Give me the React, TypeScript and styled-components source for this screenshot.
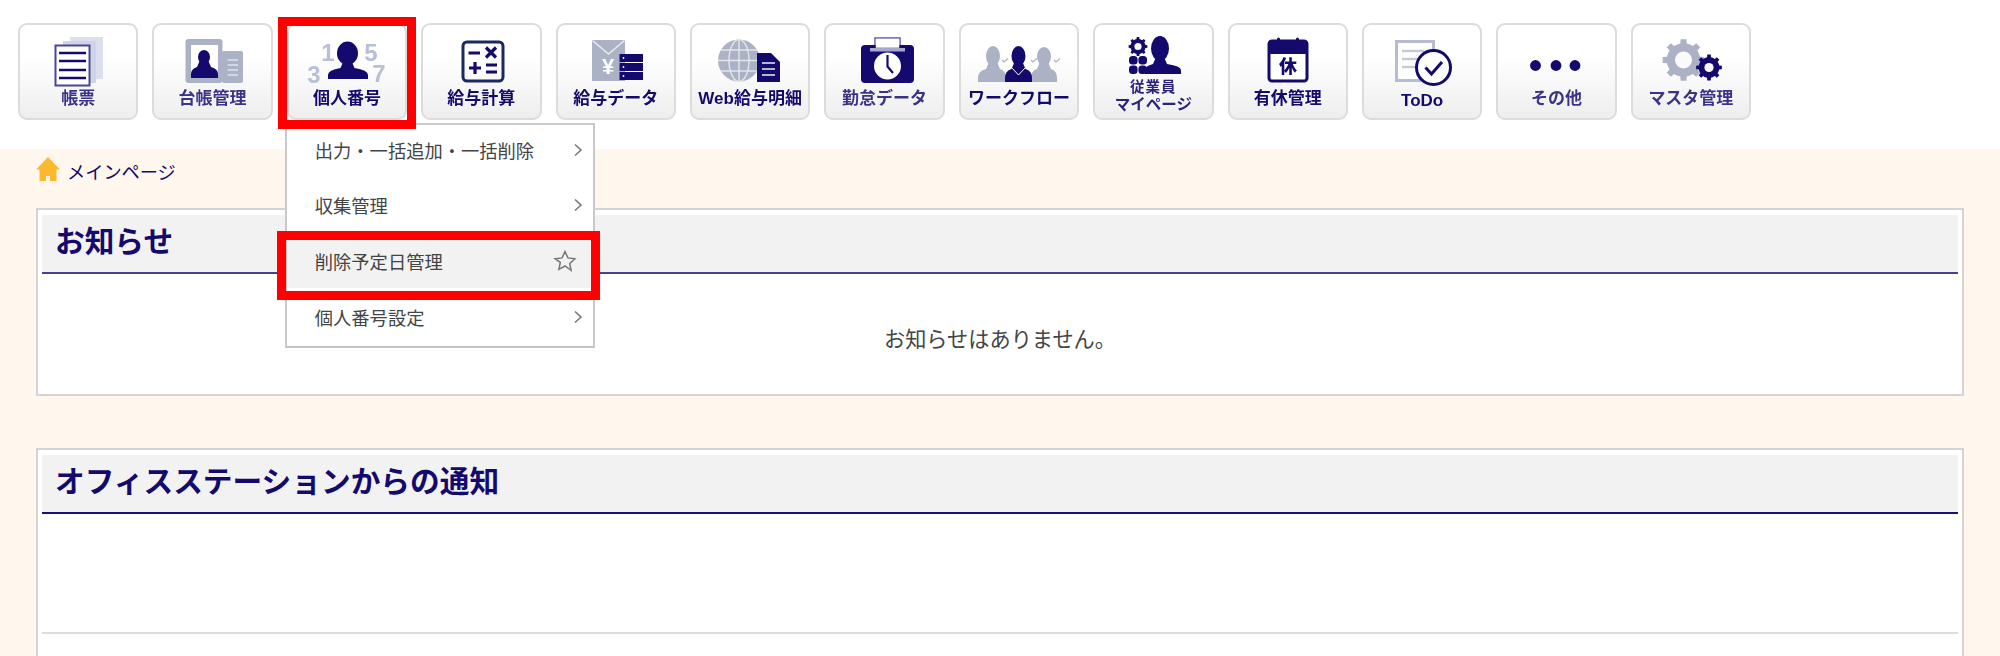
import React from "react";
import styled, { createGlobalStyle } from "styled-components";

const NAVY = "#140a6e";
const GREY = "#abb2c6";
const PALE = "#cfd5e6";

const Global = createGlobalStyle`
  html, body { margin: 0; padding: 0; background: #fff; }
  body { font-family: "Liberation Sans", "Noto Sans CJK JP", sans-serif; }
`;

const Page = styled.div`
  width: 2000px;
  height: 656px;
  overflow: hidden;
  display: flex;
  flex-direction: column;
`;
const Header = styled.header`
  height: 149px;
  flex: none;
  background: #fff;
  display: flex;
  gap: 14px;
  padding: 23px 0 0 18px;
  box-sizing: border-box;
  position: relative;
  z-index: 2;
`;
const NavSlot = styled.div`
  position: relative;
  width: 120.4px;
  height: 97px;
  flex: none;
`;
const NavButton = styled.div`
  width: 100%;
  height: 100%;
  box-sizing: border-box;
  border: 2px solid #dcdcdc;
  border-radius: 9px;
  background: linear-gradient(#ffffff 35%, #eeeeee 100%);
  display: flex;
  flex-direction: column;
  align-items: center;
  overflow: hidden;
`;
const IconSvg = styled.svg`
  display: block;
  flex: none;
  width: 116px;
  height: 62px;
  filter: blur(0.45px);
`;
const Label = styled.div<{ $shift?: number; $soft?: boolean }>`
  margin-top: ${(p) => p.$shift ?? 1}px;
  font-size: 17px;
  font-weight: 700;
  line-height: 22px;
  color: ${(p) => (p.$soft ? "#3a3389" : NAVY)};
  white-space: nowrap;
  filter: blur(0.35px);
`;
const TwoLine = styled.div`
  margin-top: -9px;
  font-size: 15.5px;
  font-weight: 700;
  line-height: 18px;
  color: #2a2280;
  text-align: center;
  white-space: nowrap;
  filter: blur(0.35px);
`;
const SmallLine = styled.div`
  font-size: 14.5px;
  letter-spacing: 1px;
`;
const RedFrame = styled.div`
  position: absolute;
  box-sizing: border-box;
  border: 9px solid #ff0000;
  pointer-events: none;
  z-index: 5;
`;
const NavFrame = styled(RedFrame)`
  top: -6px;
  left: -9px;
  right: -9px;
  bottom: -9px;
`;
const Menu = styled.div`
  position: absolute;
  top: 100px;
  left: -2px;
  width: 310px;
  height: 225px;
  box-sizing: border-box;
  background: #fff;
  border: 2px solid #c9c9c9;
  border-bottom-color: #c4c1bc;
  display: flex;
  flex-direction: column;
  z-index: 4;
`;
const MenuItem = styled.div<{ $active?: boolean }>`
  position: relative;
  height: 55.6px;
  flex: none;
  box-sizing: border-box;
  display: flex;
  align-items: center;
  justify-content: space-between;
  padding: 0 ${(p) => (p.$active ? 16 : 10)}px 6px 28px;
  font-size: 18.3px;
  color: #444;
  background: ${(p) => (p.$active ? "linear-gradient(transparent 4px, #f2f2f2 4px, #f2f2f2 52px, transparent 52px)" : "transparent")};
`;
const ItemFrame = styled(RedFrame)`
  top: -5px;
  bottom: -8px;
  left: -10px;
  right: -7px;
`;
const Main = styled.main`
  flex: 1;
  background: #fff7ee;
  padding: 0 36px;
  min-height: 0;
`;
const Crumb = styled.div`
  height: 59px;
  display: flex;
  align-items: flex-start;
  gap: 7px;
  padding-top: 8px;
  box-sizing: border-box;
  color: ${NAVY};
  font-size: 18.2px;
  line-height: 33px;
`;
const Panel = styled.section<{ $grow?: boolean }>`
  box-sizing: border-box;
  background: #fff;
  border: 2px solid #d6d3ce;
  padding: 5px 4px;
  height: ${(p) => (p.$grow ? "240px" : "188px")};
  margin-bottom: 52px;
`;
const PanelHead = styled.h2<{ $line: string }>`
  margin: 0;
  height: 59px;
  box-sizing: border-box;
  background: #f2f2f2;
  border-bottom: 2px solid ${(p) => p.$line};
  padding: 0 13px;
  font-size: 29.7px;
  font-weight: 700;
  line-height: 53px;
  color: ${NAVY};
  white-space: nowrap;
`;
const NoticeText = styled.p`
  margin: 0;
  padding-top: 50px;
  text-align: center;
  font-size: 21.2px;
  line-height: 32px;
  color: #444;
`;
const EmptyBody = styled.div`
  height: 120px;
  box-sizing: border-box;
  border-bottom: 2px solid #dddddd;
`;

const Icon: React.FC<{ children: React.ReactNode }> = ({ children }) => (
  <IconSvg viewBox="2 2 116 62">{children}</IconSvg>
);

const Bust: React.FC<{ cx: number; top: number; neck: number; rx: number; l: number; r: number; b: number; fill: string }> = ({ cx, top, neck, rx, l, r, b, fill }) => (
  <g fill={fill}>
    <ellipse cx={cx} cy={(top + neck) / 2} rx={rx} ry={(neck - top) / 2} />
    <path d={`M${l} ${b} V${b - 4} Q${l} ${neck + 5} ${cx - 7} ${neck + 3} L${cx - 4} ${neck - 4} H${cx + 4} L${cx + 7} ${neck + 3} Q${r} ${neck + 5} ${r} ${b - 4} V${b} Z`} />
  </g>
);

const gearPath = (cx: number, cy: number, R: number, r: number, teeth: number) => {
  const pts: string[] = [];
  const step = (Math.PI * 2) / teeth;
  for (let i = 0; i < teeth; i++) {
    const a = i * step - Math.PI / 2;
    const w = step * 0.22;
    const seq: [number, number][] = [
      [r, a - step / 2 + w * 0.3],
      [r, a - w * 1.1],
      [R, a - w * 0.8],
      [R, a + w * 0.8],
      [r, a + w * 1.1],
    ];
    seq.forEach(([rad, t]) => pts.push(`${(cx + rad * Math.cos(t)).toFixed(2)} ${(cy + rad * Math.sin(t)).toFixed(2)}`));
  }
  return `M${pts.join("L")}Z`;
};

const Gear: React.FC<{ cx: number; cy: number; R: number; fill: string; hole: number }> = ({ cx, cy, R, fill, hole }) => (
  <g>
    <path d={gearPath(cx, cy, R, R * 0.8, 8)} fill={fill} />
    <circle cx={cx} cy={cy} r={hole} fill="#fafafa" />
  </g>
);

const Digit = styled.text`
  font-family: "Liberation Sans", sans-serif;
  font-weight: 700;
  font-size: 24px;
  fill: #b8bfd6;
  text-anchor: middle;
`;
const KanjiGlyph = styled.text`
  font-family: "Noto Sans CJK JP", sans-serif;
  font-weight: 900;
  font-size: 18px;
  fill: ${NAVY};
  text-anchor: middle;
`;
const YenGlyph = styled.text`
  font-family: "Liberation Sans", sans-serif;
  font-weight: 700;
  font-size: 22px;
  fill: #fff;
  text-anchor: middle;
`;

const Lines: React.FC<{ x1: number; x2: number; ys: number[]; color: string; w?: number }> = ({ x1, x2, ys, color, w = 2 }) => (
  <g stroke={color} strokeWidth={w}>
    {ys.map((y) => (
      <line key={y} x1={x1} x2={x2} y1={y} y2={y} />
    ))}
  </g>
);

const icons = {
  ledger: (
    <Icon>
      <rect x="52" y="14" width="33" height="42" fill={PALE} opacity=".75" />
      <rect x="45" y="18" width="33" height="42" fill={PALE} />
      <rect x="37.5" y="22.5" width="34" height="40" fill="#fff" stroke="#4a4596" strokeWidth="2" />
      <Lines x1={41} x2={68} ys={[30, 38, 47, 55]} color={NAVY} w={2.5} />
    </Icon>
  ),
  register: (
    <Icon>
      <rect x="32.5" y="16" width="37" height="44" rx="3" fill={GREY} />
      <rect x="69" y="28" width="21" height="32" rx="2" fill={GREY} />
      <rect x="38" y="22" width="27" height="33" fill="#fff" />
      <Bust cx={51} top={27} neck={41} rx={6} l={38} r={65} b={55} fill={NAVY} />
      <Lines x1={74.5} x2={85} ys={[37, 42, 47, 52]} color="#dfe2ea" w={1.5} />
    </Icon>
  ),
  mynumber: (
    <Icon>
      <Digit x="41" y="38">1</Digit>
      <Digit x="84" y="38">5</Digit>
      <Digit x="27" y="60">3</Digit>
      <Digit x="92" y="59">7</Digit>
      <Bust cx={60.5} top={18.5} neck={42} rx={10.5} l={41} r={81} b={56} fill={NAVY} />
    </Icon>
  ),
  calc: (
    <Icon>
      <rect x="42" y="19" width="40" height="39" rx="4" fill="none" stroke="#1b2a5e" strokeWidth="3" />
      <g stroke={NAVY} strokeWidth="3.2" fill="none">
        <path d="M47.5 30H59M65 24.5L75 34.5M75 24.5L65 34.5M48 45H60M54 39V51M65 42H76M65 49H76" />
      </g>
    </Icon>
  ),
  pay: (
    <Icon>
      <rect x="36" y="17" width="33" height="41" fill={GREY} />
      <path d="M36.500 17.500L52.500 31L68.500 17.500" fill="none" stroke="#e9ebf1" strokeWidth="1.5" />
      <YenGlyph x="52" y="51">¥</YenGlyph>
      {[31, 40, 49].map((y) => (
        <g key={y}>
          <rect x="63.5" y={y} width="23.5" height="8" fill={NAVY} />
          <circle cx="67.5" cy={y + 4} r="0.9" fill="#fff" />
        </g>
      ))}
    </Icon>
  ),
  web: (
    <Icon>
      <circle cx="49" cy="37.5" r="21" fill={GREY} />
      <g fill="none" stroke="#e3e5ec" strokeWidth="1.4">
        <ellipse cx="49" cy="37.5" rx="10" ry="21" />
        <path d="M49 16.500V58.500M28 37.500H70M31 27H67M31 48H67" />
      </g>
      <path d="M67 30H81L90 39V59H67Z" fill={NAVY} />
      <Lines x1={72} x2={85} ys={[40, 46, 52]} color="#dfe2ea" w={1.6} />
    </Icon>
  ),
  attendance: (
    <Icon>
      <rect x="50" y="15" width="25" height="14" fill="#fff" stroke="#5a52a6" strokeWidth="1.5" />
      <rect x="36" y="22" width="53" height="38" rx="4" fill={NAVY} />
      <rect x="50.750" y="15.750" width="23.500" height="9" fill="#fff" />
      <rect x="45" y="25" width="35" height="3.5" fill="#a9a6cf" />
      <circle cx="62.5" cy="43" r="13.5" fill="#fff" />
      <path d="M62.500 32V43.500L68 50" fill="none" stroke={NAVY} strokeWidth="2.2" />
    </Icon>
  ),
  flow: (
    <Icon>
      <Bust cx={34} top={23} neck={43} rx={7} l={19} r={47} b={59} fill={GREY} />
      <Bust cx={85} top={24} neck={43} rx={7} l={72} r={98} b={59} fill={GREY} />
      <Bust cx={59.5} top={23} neck={43} rx={7} l={46} r={73} b={59} fill={NAVY} />
      <path d="M53 45L59.500 52L66 45" fill="none" stroke="#fff" strokeWidth="1" />
      <g fill="none" stroke={GREY} strokeWidth="1.2">
        <path d="M43 37l2 2l4-3.500M72 37l2 2l4-3.500M95 37l2 2l4-3.500" />
      </g>
    </Icon>
  ),
  mypage: (
    <Icon>
      <Bust cx={67} top={13} neck={38} rx={9} l={52} r={88} b={51} fill={NAVY} />
      <Gear cx={45} cy={23.5} R={9.5} fill={NAVY} hole={3.6} />
      <g fill={NAVY}>
        <rect x="36" y="33" width="8.6" height="8.6" rx="3.5" />
        <rect x="45.4" y="33" width="8.6" height="8.6" rx="3.5" />
        <rect x="36" y="42.5" width="8.6" height="8.6" rx="3.5" />
        <rect x="45.4" y="42.5" width="8.6" height="8.6" rx="3.5" />
      </g>
    </Icon>
  ),
  leave: (
    <Icon>
      <rect x="41" y="18" width="38" height="40" rx="3" fill="#fff" stroke={NAVY} strokeWidth="3" />
      <rect x="40" y="18" width="40" height="13" rx="3" fill={NAVY} />
      <rect x="49" y="14.5" width="3" height="7" rx="1.5" fill={NAVY} />
      <rect x="68" y="14.5" width="3" height="7" rx="1.5" fill={NAVY} />
      <KanjiGlyph x="60" y="50">休</KanjiGlyph>
    </Icon>
  ),
  todo: (
    <Icon>
      <rect x="34.5" y="18.5" width="37" height="39" fill="#fff" stroke="#b6bdd2" strokeWidth="3" />
      <Lines x1={40} x2={62} ys={[28, 36, 44]} color="#c3c9da" w={2.4} />
      <circle cx="71.5" cy="44.5" r="17" fill="#fff" stroke={NAVY} strokeWidth="3" />
      <path d="M63.500 44.500L69.500 51L80 39" fill="none" stroke={NAVY} strokeWidth="3" />
    </Icon>
  ),
  more: (
    <Icon>
      <g fill={NAVY}>
        <circle cx="39.5" cy="42.5" r="5.4" />
        <circle cx="60" cy="42.5" r="5.4" />
        <circle cx="79" cy="42.5" r="5.4" />
      </g>
    </Icon>
  ),
  master: (
    <Icon>
      <Gear cx={52.5} cy={37} R={21} fill={GREY} hole={8.5} />
      <Gear cx={78} cy={44.5} R={13} fill={NAVY} hole={4.6} />
    </Icon>
  ),
};

const Chevron = () => (
  <svg width="10" height="14" viewBox="0 0 10 14" aria-hidden="true">
    <path d="M2 1.500L8 7L2 12.500" fill="none" stroke="#777" strokeWidth="1.6" />
  </svg>
);
const Star = () => (
  <svg width="24" height="24" viewBox="0 0 24 24" aria-hidden="true">
    <path d="M12 2.500l2.900 6.400 7 .8-5.200 4.700 1.400 6.900L12 17l-6.100 3.300 1.400-6.900L2.100 9.700l7-.8z" fill="none" stroke="#777" strokeWidth="1.5" />
  </svg>
);
const Home = () => (
  <svg width="24" height="24" viewBox="0 0 24 24" aria-hidden="true">
    <path d="M12 0L24 12.500H20.500V24H14V19H10V24H3.500V12.500H0Z" fill="#fdb92e" />
  </svg>
);

const menuItems = ["出力・一括追加・一括削除", "収集管理", "削除予定日管理", "個人番号設定"];

export default function App() {
  return (
    <Page>
      <Global />
      <Header>
        <NavSlot><NavButton>{icons.ledger}<Label $soft>帳票</Label></NavButton></NavSlot>
        <NavSlot><NavButton>{icons.register}<Label $soft>台帳管理</Label></NavButton></NavSlot>
        <NavSlot>
          <NavButton>{icons.mynumber}<Label>個人番号</Label></NavButton>
          <NavFrame />
          <Menu>
            {menuItems.map((t, i) => (
              <MenuItem key={t} $active={i === 2}>
                <span>{t}</span>
                {i === 2 ? <Star /> : <Chevron />}
                {i === 2 && <ItemFrame />}
              </MenuItem>
            ))}
          </Menu>
        </NavSlot>
        <NavSlot><NavButton>{icons.calc}<Label>給与計算</Label></NavButton></NavSlot>
        <NavSlot><NavButton>{icons.pay}<Label>給与データ</Label></NavButton></NavSlot>
        <NavSlot><NavButton>{icons.web}<Label>Web給与明細</Label></NavButton></NavSlot>
        <NavSlot><NavButton>{icons.attendance}<Label $soft>勤怠データ</Label></NavButton></NavSlot>
        <NavSlot><NavButton>{icons.flow}<Label>ワークフロー</Label></NavButton></NavSlot>
        <NavSlot>
          <NavButton>
            {icons.mypage}
            <TwoLine><SmallLine>従業員</SmallLine>マイページ</TwoLine>
          </NavButton>
        </NavSlot>
        <NavSlot><NavButton>{icons.leave}<Label>有休管理</Label></NavButton></NavSlot>
        <NavSlot><NavButton>{icons.todo}<Label $shift={3}>ToDo</Label></NavButton></NavSlot>
        <NavSlot><NavButton>{icons.more}<Label $soft $shift={1}>その他</Label></NavButton></NavSlot>
        <NavSlot><NavButton>{icons.master}<Label $soft>マスタ管理</Label></NavButton></NavSlot>
      </Header>
      <Main>
        <Crumb><Home />メインページ</Crumb>
        <Panel>
          <PanelHead $line="#4b3f93">お知らせ</PanelHead>
          <NoticeText>お知らせはありません。</NoticeText>
        </Panel>
        <Panel $grow>
          <PanelHead $line="#1c0f78">オフィスステーションからの通知</PanelHead>
          <EmptyBody />
        </Panel>
      </Main>
    </Page>
  );
}
